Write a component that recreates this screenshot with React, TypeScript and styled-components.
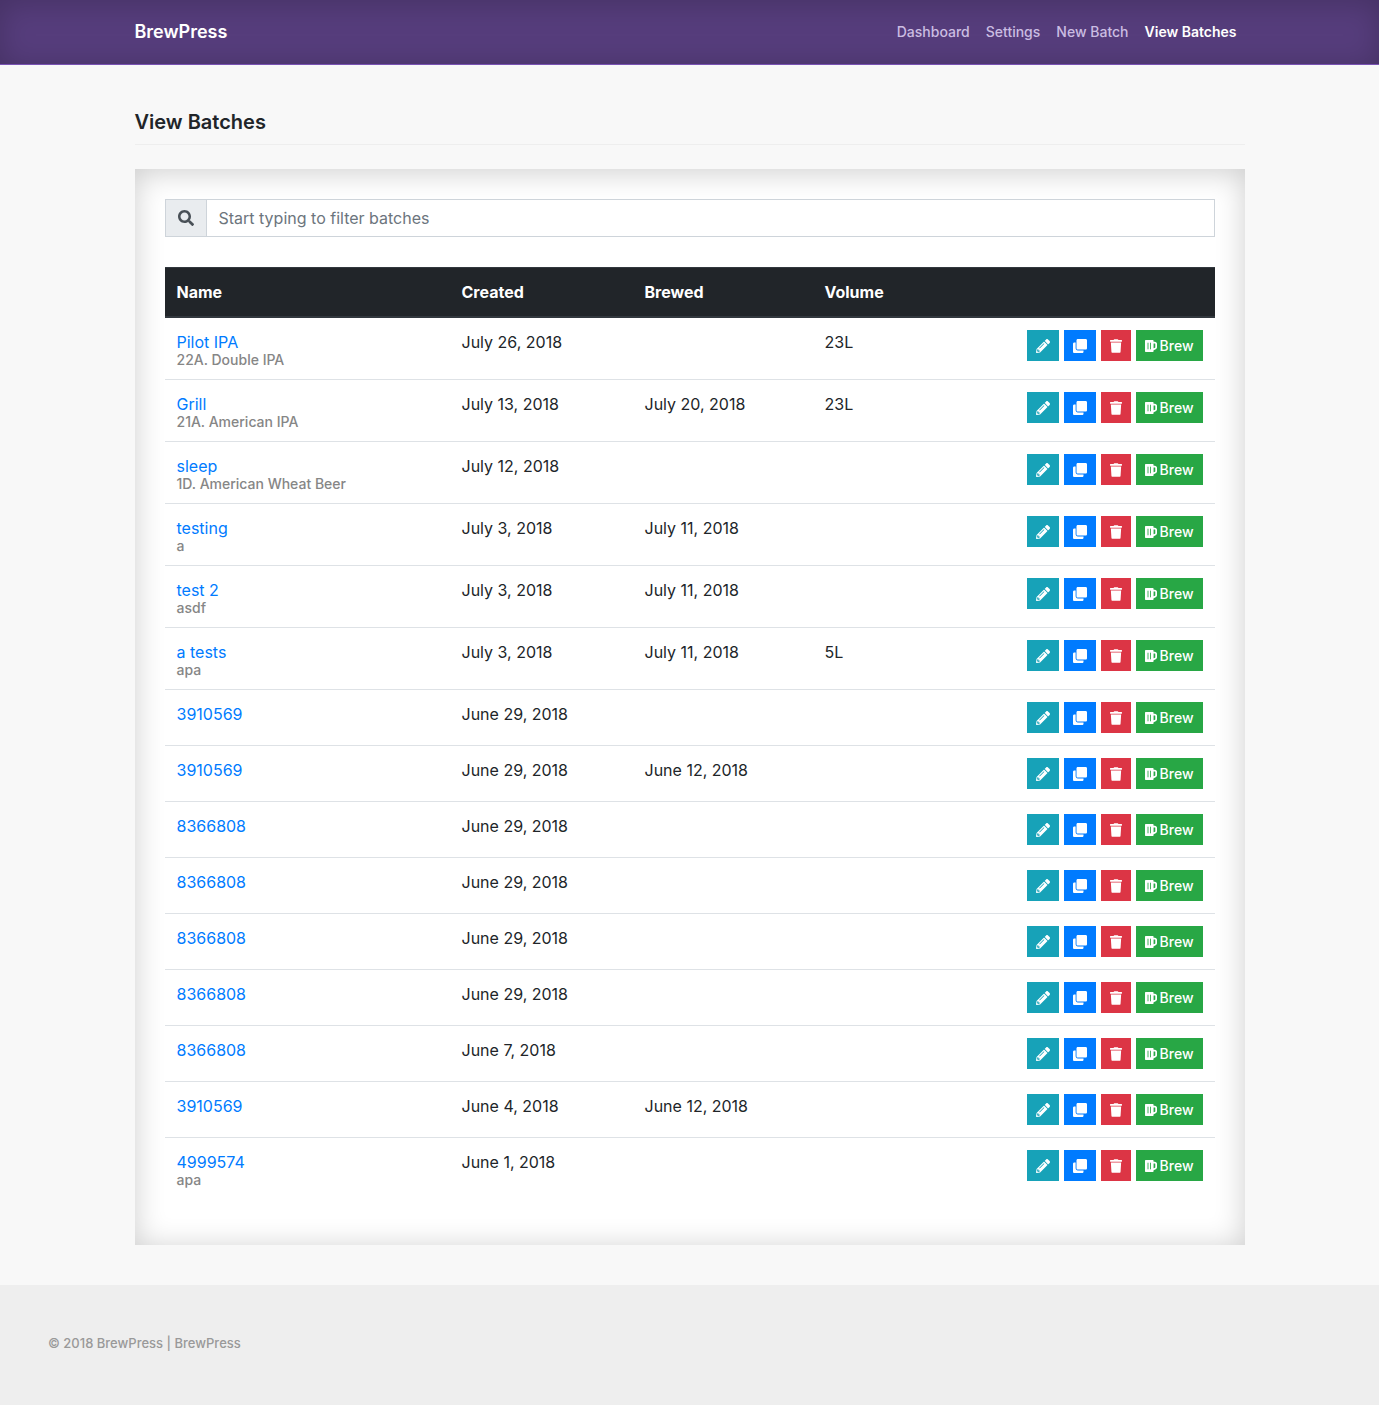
import React, { useState } from "react";
import styled, { createGlobalStyle } from "styled-components";
import { FaBeer, FaClone, FaPencilAlt, FaSearch, FaTrash } from "react-icons/fa";

const GlobalStyle = createGlobalStyle`
  *, *::before, *::after { box-sizing: border-box; }
  body {
    margin: 0;
    background: #f8f8f8;
    color: #212529;
    font-family: Inter, "Liberation Sans", sans-serif;
    font-size: 16px;
    line-height: 24px;
  }
`;

const Container = styled.div`
  width: 100%;
  max-width: 1140px;
  margin: 0 auto;
  padding: 0 15px;
`;

const Header = styled.header`
  background: #563d7c;
  border-bottom: 1px solid #7952b3;
  box-shadow: inset 0 3px 30px rgba(0, 0, 0, 0.2);
`;

const HeaderRow = styled(Container)`
  display: flex;
  align-items: center;
  justify-content: space-between;
  height: 64px;
`;

const Brand = styled.a`
  color: #fff;
  font-size: 18px;
  font-weight: 600;
  text-decoration: none;
`;

const Nav = styled.nav`
  display: flex;
`;

const NavLink = styled.a<{ $active?: boolean }>`
  padding: 8px;
  color: ${(p) => (p.$active ? "#fff" : "#cbbde2")};
  font-size: 14px;
  font-weight: ${(p) => (p.$active ? 600 : 500)};
  text-decoration: none;
`;

const Title = styled.h1`
  margin: 0 0 24px;
  padding: 45px 0 10px;
  border-bottom: 1px solid #eee;
  font-size: 20px;
  font-weight: 600;
  line-height: 24px;
`;

const Card = styled.section`
  margin-bottom: 40px;
  padding: 30px 30px 46px;
  background: #fff;
  box-shadow: inset 0 3px 30px rgba(0, 0, 0, 0.2);
`;

const Search = styled.div`
  display: flex;
  height: 38px;
  margin-bottom: 30px;
  border: 1px solid #ced4da;
  background: #fff;
`;

const SearchLabel = styled.label`
  display: flex;
  align-items: center;
  padding: 0 12px;
  border-right: 1px solid #ced4da;
  background: #e9ecef;
  color: #495057;
`;

const SearchInput = styled.input`
  flex: 1;
  min-width: 0;
  padding: 0 12px;
  border: 0;
  background: transparent;
  color: #495057;
  font: inherit;
  &::placeholder { color: #6c757d; opacity: 1; }
`;

const Table = styled.table`
  width: 100%;
  border-collapse: separate;
  border-spacing: 0;
  table-layout: fixed;
`;

const HeadCell = styled.th<{ $width?: number }>`
  width: ${(p) => (p.$width ? `${p.$width}px` : "auto")};
  height: 51px;
  padding: 12px;
  border-top: 1px solid #32383e;
  border-bottom: 2px solid #32383e;
  background: #212529;
  color: #fff;
  font-weight: 700;
  text-align: left;
`;

const Cell = styled.td`
  padding: 12px;
  border-top: 1px solid #dee2e6;
  vertical-align: top;
  tr:first-child > & { border-top: 0; }
`;

const BatchLink = styled.a`
  display: block;
  color: #007bff;
  text-decoration: none;
`;

const BeerStyle = styled.div`
  padding-bottom: 2px;
  color: #868686;
  font-size: 14px;
  font-weight: 500;
  line-height: 11px;
`;

const Actions = styled.div`
  display: flex;
  justify-content: flex-end;
  gap: 5px;
`;

const ActionButton = styled.button<{ $color: string; $iconWidth?: number }>`
  display: flex;
  align-items: center;
  gap: 3px;
  height: 31px;
  padding: 0 8px;
  border: 1px solid ${(p) => p.$color};
  background: ${(p) => p.$color};
  color: #fff;
  font-family: inherit;
  font-size: 14px;
  font-weight: 500;
  line-height: 21px;
  cursor: pointer;

  svg {
    flex: none;
    width: ${(p) => p.$iconWidth ?? 14}px;
    height: 14px;
  }
`;

const Footer = styled.footer`
  padding: 48px 48px 52px;
  background: #eee;
  color: #999;
  font-size: 13px;
  font-weight: 500;
  line-height: 20px;
`;

type Batch = { name: string; style?: string; created: string; brewed?: string; volume?: string };

const batches: Batch[] = [
  { name: "Pilot IPA", style: "22A. Double IPA", created: "July 26, 2018", volume: "23L" },
  { name: "Grill", style: "21A. American IPA", created: "July 13, 2018", brewed: "July 20, 2018", volume: "23L" },
  { name: "sleep", style: "1D. American Wheat Beer", created: "July 12, 2018" },
  { name: "testing", style: "a", created: "July 3, 2018", brewed: "July 11, 2018" },
  { name: "test 2", style: "asdf", created: "July 3, 2018", brewed: "July 11, 2018" },
  { name: "a tests", style: "apa", created: "July 3, 2018", brewed: "July 11, 2018", volume: "5L" },
  { name: "3910569", created: "June 29, 2018" },
  { name: "3910569", created: "June 29, 2018", brewed: "June 12, 2018" },
  { name: "8366808", created: "June 29, 2018" },
  { name: "8366808", created: "June 29, 2018" },
  { name: "8366808", created: "June 29, 2018" },
  { name: "8366808", created: "June 29, 2018" },
  { name: "8366808", created: "June 7, 2018" },
  { name: "3910569", created: "June 4, 2018", brewed: "June 12, 2018" },
  { name: "4999574", style: "apa", created: "June 1, 2018" },
];

const links = ["Dashboard", "Settings", "New Batch", "View Batches"];

function BatchRow({ batch }: { batch: Batch }) {
  return (
    <tr>
      <Cell>
        <BatchLink href="#">{batch.name}</BatchLink>
        {batch.style && <BeerStyle>{batch.style}</BeerStyle>}
      </Cell>
      <Cell>{batch.created}</Cell>
      <Cell>{batch.brewed}</Cell>
      <Cell>{batch.volume}</Cell>
      <Cell>
        <Actions>
          <ActionButton $color="#17a2b8" aria-label="Edit"><FaPencilAlt /></ActionButton>
          <ActionButton $color="#007bff" aria-label="Duplicate"><FaClone /></ActionButton>
          <ActionButton $color="#dc3545" $iconWidth={12} aria-label="Delete"><FaTrash /></ActionButton>
          <ActionButton $color="#28a745" $iconWidth={12}><FaBeer />Brew</ActionButton>
        </Actions>
      </Cell>
    </tr>
  );
}

export default function App() {
  const [query, setQuery] = useState("");
  const needle = query.toLowerCase();
  const visible = batches.filter((b) => `${b.name} ${b.style ?? ""}`.toLowerCase().includes(needle));

  return (
    <>
      <GlobalStyle />
      <Header>
        <HeaderRow>
          <Brand href="#">BrewPress</Brand>
          <Nav>
            {links.map((label) => (
              <NavLink key={label} href="#" $active={label === "View Batches"}>{label}</NavLink>
            ))}
          </Nav>
        </HeaderRow>
      </Header>
      <Container as="main">
        <Title>View Batches</Title>
        <Card>
          <Search>
            <SearchLabel htmlFor="filter" aria-label="Filter batches"><FaSearch size={16} /></SearchLabel>
            <SearchInput
              id="filter"
              type="text"
              placeholder="Start typing to filter batches"
              value={query}
              onChange={(e) => setQuery(e.target.value)}
            />
          </Search>
          <Table>
            <thead>
              <tr>
                <HeadCell $width={285}>Name</HeadCell>
                <HeadCell $width={183}>Created</HeadCell>
                <HeadCell $width={180}>Brewed</HeadCell>
                <HeadCell $width={150}>Volume</HeadCell>
                <HeadCell aria-label="Actions" />
              </tr>
            </thead>
            <tbody>
              {visible.map((batch, i) => <BatchRow key={i} batch={batch} />)}
            </tbody>
          </Table>
        </Card>
      </Container>
      <Footer>© 2018 BrewPress | BrewPress</Footer>
    </>
  );
}
